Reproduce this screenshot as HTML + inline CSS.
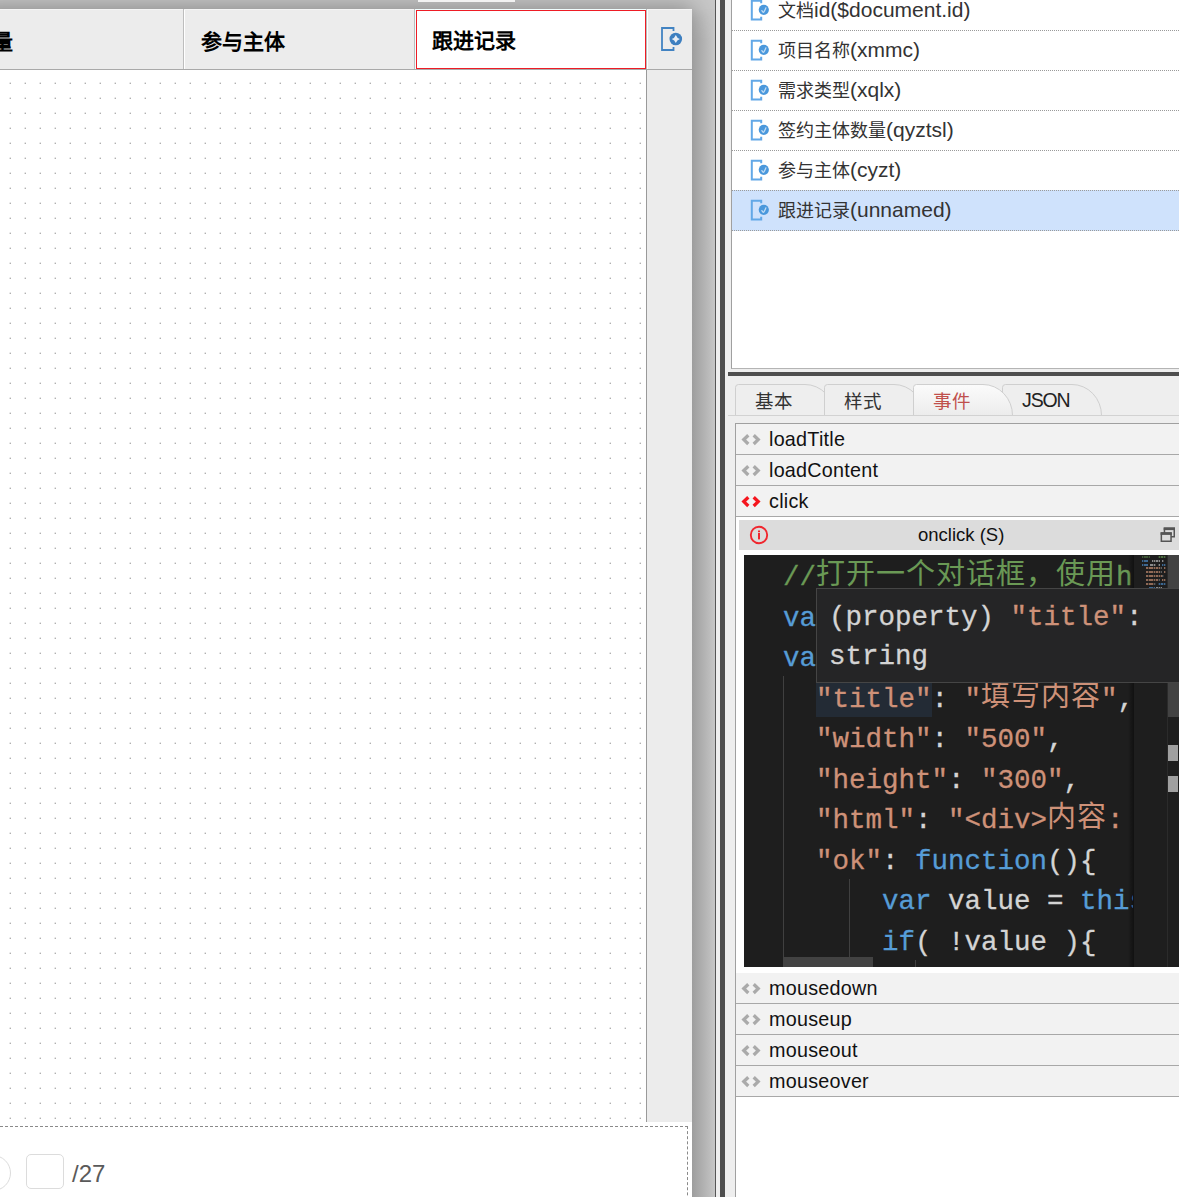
<!DOCTYPE html>
<html lang="zh-CN"><head><meta charset="utf-8">
<style>
*{margin:0;padding:0;box-sizing:border-box}
html,body{width:1179px;height:1197px;overflow:hidden;background:#eeeeee;font-family:"Liberation Sans",sans-serif}
.a{position:absolute}
#bg{left:0;top:0;width:715px;height:1197px;background:#c8c8c8;overflow:hidden}
#panel{left:-20px;top:9px;width:712px;height:1250px;background:#fff;box-shadow:0 0 22px 2px rgba(0,0,0,0.32)}
#hdr{left:0;top:9px;width:692px;height:61px;background:#ececec;border-top:1px solid #f5f5f5;border-bottom:1px solid #a9a9a9}
.sep{top:9px;width:1px;height:60px;background:#bdbdbd}
.sepw{top:10px;width:1px;height:59px;background:#fff}
.ht{font-weight:bold;font-size:21px;color:#000;top:29px;line-height:26px;white-space:nowrap}
#grid{left:0;top:70px;width:646px;height:1052px}
#vstrip{left:646px;top:70px;width:46px;height:1052px;background:#ececec;border-left:1px solid #9a9a9a}
#bottom{left:0;top:1122px;width:692px;height:75px;background:#fff}
.rl{font-size:21px;color:#333;white-space:nowrap}
.row{left:732px;width:447px;height:40px;border-bottom:1px dotted #9a9a9a}
.ev{left:736px;width:443px;height:31px;background:#f2f2f2;border-bottom:1px solid #a8a8a8}
.evt{position:absolute;left:33px;top:4px;letter-spacing:0.25px;font-size:19.75px;color:#111;line-height:22px;white-space:nowrap}
.code{font-family:"Liberation Mono",monospace;font-size:27.5px;white-space:pre;line-height:40.5px;-webkit-text-stroke:0.3px}
.c{font-size:18px}
.cj{font-size:29px;letter-spacing:1px;line-height:0;font-family:"Liberation Sans",sans-serif;position:relative;top:-1px;-webkit-text-stroke:0}
</style></head><body>
<!-- left workspace -->
<div id="bg" class="a">
    <div id="panel" class="a"></div>
  <div class="a" style="left:692px;top:9px;width:23px;height:1188px;background:linear-gradient(to right,#9d9d9d,#c6c6c6);-webkit-mask-image:linear-gradient(to bottom,transparent 0,#000 30px)"></div>
  <div class="a" style="left:418px;top:0;width:97px;height:2px;background:#f2f2f2"></div>
  <div id="hdr" class="a"></div>
  <div class="a sep" style="left:183px"></div>
  <div class="a sepw" style="left:184px"></div>
  <div class="a sep" style="left:414px"></div>
  <div class="a" style="left:415px;top:9px;width:231px;height:60px;background:#fff;border:1px solid #f0ffff"></div>
  <div class="a" style="left:416px;top:10px;width:230px;height:59px;border:1px solid #ee1c25"></div>
  <div class="a sep" style="left:646px;background:#b6bdbd"></div>
  <div class="a sepw" style="left:647px"></div>
  <div class="a ht" style="left:-8px">量</div>
  <div class="a ht" style="left:201px">参与主体</div>
  <div class="a ht" style="left:432px;top:28px">跟进记录</div>
  <div id="grid" class="a"><svg width="646" height="1052" style="display:block"><defs><pattern id="dp" x="9" y="12" width="15" height="15" patternUnits="userSpaceOnUse"><rect x="0.6" y="0.6" width="1.4" height="1.4" fill="#b0b0b0"/></pattern></defs><rect width="646" height="1052" fill="url(#dp)"/></svg></div>
  <div id="vstrip" class="a"></div>
  <svg class="a" style="left:656px;top:24px" width="32" height="32" viewBox="0 0 32 32">
    <path d="M17.5 7 V4 H6 V26 H17.5 V23" fill="none" stroke="#4283c2" stroke-width="1.8"/>
    <circle cx="19.8" cy="15" r="6.3" fill="#3d7fc0"/>
    <path d="M19.8 10.9 Q20.900000000000002 13.9 23.9 15 Q20.900000000000002 16.1 19.8 19.1 Q18.7 16.1 15.700000000000001 15 Q18.7 13.9 19.8 10.9 Z" fill="#e8eef5"/>
  </svg>
  <div id="bottom" class="a">
    <div class="a" style="left:-10px;top:4px;width:698px;height:100px;border:1px dashed #8a8a8a"></div>
    <div class="a" style="left:-25px;top:33px;width:36px;height:36px;border:1px solid #dcdcdc;border-radius:50%"></div>
    <div class="a" style="left:26px;top:32px;width:38px;height:35px;border:1px solid #dcdcdc;border-radius:5px"></div>
    <div class="a" style="left:72px;top:38px;font-size:24px;color:#5a5a5a;line-height:28px">/27</div>
  </div>
</div>
<!-- splitter -->
<div class="a" style="left:715px;top:0;width:1px;height:1197px;background:#555"></div>
<div class="a" style="left:716px;top:0;width:4px;height:1197px;background:#eeeeee"></div>
<div class="a" style="left:720px;top:0;width:5px;height:1197px;background:#4e4e4e"></div>
<!-- list panel -->
<div class="a" style="left:731px;top:0;width:448px;height:369px;background:#fff;border-left:1px solid #a0a0a0;border-bottom:1px solid #b4b4b4"></div>
<div id="rows"><div class="a row" style="top:-9px;">
  <svg class="a" style="left:14px;top:5px" width="30" height="30" viewBox="0 0 30 30"><path d="M15.2 7.2 V4.7 H5.8 V23.5 H15.2 V20.8" fill="none" stroke="#62a8e7" stroke-width="2"/><circle cx="17.8" cy="13.8" r="5.1" fill="#4a98dc"/><path d="M15.9 14.6 Q17 16.6 17.6 16.3 Q19 14.5 19.9 11.8" fill="none" stroke="#c4ddf4" stroke-width="1.2" stroke-linecap="round"/></svg>
  <div class="a rl" style="left:46px;top:7px;line-height:24px"><span class="c">文档</span>id($document.id)</div></div>
<div class="a row" style="top:31px;">
  <svg class="a" style="left:14px;top:5px" width="30" height="30" viewBox="0 0 30 30"><path d="M15.2 7.2 V4.7 H5.8 V23.5 H15.2 V20.8" fill="none" stroke="#62a8e7" stroke-width="2"/><circle cx="17.8" cy="13.8" r="5.1" fill="#4a98dc"/><path d="M15.9 14.6 Q17 16.6 17.6 16.3 Q19 14.5 19.9 11.8" fill="none" stroke="#c4ddf4" stroke-width="1.2" stroke-linecap="round"/></svg>
  <div class="a rl" style="left:46px;top:7px;line-height:24px"><span class="c">项目名称</span>(xmmc)</div></div>
<div class="a row" style="top:71px;">
  <svg class="a" style="left:14px;top:5px" width="30" height="30" viewBox="0 0 30 30"><path d="M15.2 7.2 V4.7 H5.8 V23.5 H15.2 V20.8" fill="none" stroke="#62a8e7" stroke-width="2"/><circle cx="17.8" cy="13.8" r="5.1" fill="#4a98dc"/><path d="M15.9 14.6 Q17 16.6 17.6 16.3 Q19 14.5 19.9 11.8" fill="none" stroke="#c4ddf4" stroke-width="1.2" stroke-linecap="round"/></svg>
  <div class="a rl" style="left:46px;top:7px;line-height:24px"><span class="c">需求类型</span>(xqlx)</div></div>
<div class="a row" style="top:111px;">
  <svg class="a" style="left:14px;top:5px" width="30" height="30" viewBox="0 0 30 30"><path d="M15.2 7.2 V4.7 H5.8 V23.5 H15.2 V20.8" fill="none" stroke="#62a8e7" stroke-width="2"/><circle cx="17.8" cy="13.8" r="5.1" fill="#4a98dc"/><path d="M15.9 14.6 Q17 16.6 17.6 16.3 Q19 14.5 19.9 11.8" fill="none" stroke="#c4ddf4" stroke-width="1.2" stroke-linecap="round"/></svg>
  <div class="a rl" style="left:46px;top:7px;line-height:24px"><span class="c">签约主体数量</span>(qyztsl)</div></div>
<div class="a row" style="top:151px;">
  <svg class="a" style="left:14px;top:5px" width="30" height="30" viewBox="0 0 30 30"><path d="M15.2 7.2 V4.7 H5.8 V23.5 H15.2 V20.8" fill="none" stroke="#62a8e7" stroke-width="2"/><circle cx="17.8" cy="13.8" r="5.1" fill="#4a98dc"/><path d="M15.9 14.6 Q17 16.6 17.6 16.3 Q19 14.5 19.9 11.8" fill="none" stroke="#c4ddf4" stroke-width="1.2" stroke-linecap="round"/></svg>
  <div class="a rl" style="left:46px;top:7px;line-height:24px"><span class="c">参与主体</span>(cyzt)</div></div>
<div class="a row" style="top:190px;height:41px;border-top:1px dotted #9a9a9a;background:#cfe2fc;">
  <svg class="a" style="left:14px;top:5px" width="30" height="30" viewBox="0 0 30 30"><path d="M15.2 7.2 V4.7 H5.8 V23.5 H15.2 V20.8" fill="none" stroke="#62a8e7" stroke-width="2"/><circle cx="17.8" cy="13.8" r="5.1" fill="#4a98dc"/><path d="M15.9 14.6 Q17 16.6 17.6 16.3 Q19 14.5 19.9 11.8" fill="none" stroke="#c4ddf4" stroke-width="1.2" stroke-linecap="round"/></svg>
  <div class="a rl" style="left:46px;top:7px;line-height:24px"><span class="c">跟进记录</span>(unnamed)</div></div></div>
<!-- horizontal splitter -->
<div class="a" style="left:728px;top:372px;width:451px;height:4px;background:#4e4e4e"></div>
<!-- tabs -->
<div id="tabs"><svg class="a" style="left:725px;top:376px" width="454" height="48" viewBox="725 376 454 48">
<defs><linearGradient id="tg" x1="0" y1="0" x2="0" y2="1"><stop offset="0" stop-color="#fbfbfb"/><stop offset="1" stop-color="#ececec"/></linearGradient></defs>

<path d="M735.5 415.5 V387.5 Q735.5 384.5 738.5 384.5 H805 A29.5 31 0 0 1 834.5 415.5" fill="#eeeeee" stroke="#cfcfcf" stroke-width="1"/>
<path d="M824.5 415.5 V387.5 Q824.5 384.5 827.5 384.5 H894 A29.5 31 0 0 1 923.5 415.5" fill="#eeeeee" stroke="#cfcfcf" stroke-width="1"/>
<path d="M1002.5 415.5 V387.5 Q1002.5 384.5 1005.5 384.5 H1072 A29.5 31 0 0 1 1101.5 415.5" fill="#eeeeee" stroke="#cfcfcf" stroke-width="1"/>
<path d="M913.5 415.5 V387.5 Q913.5 384.5 916.5 384.5 H983 A29.5 31 0 0 1 1012.5 415.5" fill="url(#tg)" stroke="#cfcfcf" stroke-width="1"/>
<line x1="728" y1="415.5" x2="1179" y2="415.5" stroke="#d2d2d2" stroke-width="1"/></svg>
<div class="a" style="left:755px;top:390px;font-size:18.5px;color:#333;line-height:24px">基本</div>
<div class="a" style="left:844px;top:390px;font-size:18.5px;color:#333;line-height:24px">样式</div>
<div class="a" style="left:933px;top:390px;font-size:18.5px;color:#c0504d;line-height:24px">事件</div>
<div class="a" style="left:1022px;top:388px;color:#222;line-height:24px;font-size:19.5px;letter-spacing:-1.1px">JSON</div></div>
<!-- events panel -->
<div class="a" style="left:735px;top:423px;width:444px;height:774px;background:#fff;border-left:1px solid #a0a0a0;border-top:1px solid #a0a0a0"></div>
<div id="events"><div class="a ev" style="top:424px"><svg class="a" style="left:4px;top:9px" width="22" height="14" viewBox="0 0 22 14"><path d="M8.3 2.2 L3.8 6.6 L8.3 11 M13.7 2.2 L18.2 6.6 L13.7 11" fill="none" stroke="#aaaaaa" stroke-width="3.3"/></svg><div class="evt">loadTitle</div></div>
<div class="a ev" style="top:455px"><svg class="a" style="left:4px;top:9px" width="22" height="14" viewBox="0 0 22 14"><path d="M8.3 2.2 L3.8 6.6 L8.3 11 M13.7 2.2 L18.2 6.6 L13.7 11" fill="none" stroke="#aaaaaa" stroke-width="3.3"/></svg><div class="evt">loadContent</div></div>
<div class="a ev" style="top:486px"><svg class="a" style="left:4px;top:9px" width="22" height="14" viewBox="0 0 22 14"><path d="M8.3 2.2 L3.8 6.6 L8.3 11 M13.7 2.2 L18.2 6.6 L13.7 11" fill="none" stroke="#f5161e" stroke-width="3.3"/></svg><div class="evt">click</div></div>
<div class="a ev" style="top:973px"><svg class="a" style="left:4px;top:9px" width="22" height="14" viewBox="0 0 22 14"><path d="M8.3 2.2 L3.8 6.6 L8.3 11 M13.7 2.2 L18.2 6.6 L13.7 11" fill="none" stroke="#aaaaaa" stroke-width="3.3"/></svg><div class="evt">mousedown</div></div>
<div class="a ev" style="top:1004px"><svg class="a" style="left:4px;top:9px" width="22" height="14" viewBox="0 0 22 14"><path d="M8.3 2.2 L3.8 6.6 L8.3 11 M13.7 2.2 L18.2 6.6 L13.7 11" fill="none" stroke="#aaaaaa" stroke-width="3.3"/></svg><div class="evt">mouseup</div></div>
<div class="a ev" style="top:1035px"><svg class="a" style="left:4px;top:9px" width="22" height="14" viewBox="0 0 22 14"><path d="M8.3 2.2 L3.8 6.6 L8.3 11 M13.7 2.2 L18.2 6.6 L13.7 11" fill="none" stroke="#aaaaaa" stroke-width="3.3"/></svg><div class="evt">mouseout</div></div>
<div class="a ev" style="top:1066px"><svg class="a" style="left:4px;top:9px" width="22" height="14" viewBox="0 0 22 14"><path d="M8.3 2.2 L3.8 6.6 L8.3 11 M13.7 2.2 L18.2 6.6 L13.7 11" fill="none" stroke="#aaaaaa" stroke-width="3.3"/></svg><div class="evt">mouseover</div></div>
<div class="a" style="left:739px;top:520px;width:440px;height:30px;background:#dcdcdc">
  <svg class="a" style="left:10px;top:5px" width="20" height="20" viewBox="0 0 20 20"><circle cx="10" cy="10" r="8.2" fill="none" stroke="#f0262e" stroke-width="1.9"/><rect x="9" y="5.5" width="2" height="1.7" fill="#f0262e"/><rect x="9" y="8" width="2" height="6.4" fill="#f0262e"/></svg>
  <div class="a" style="left:179px;top:4px;font-size:18.5px;color:#111;line-height:22px;white-space:nowrap">onclick (S)</div>
  <svg class="a" style="left:421px;top:7px" width="17" height="17" viewBox="0 0 17 17"><rect x="4.45" y="1.25" width="9.8" height="8.5" fill="none" stroke="#555" stroke-width="1.5"/><rect x="3.7" y="0.5" width="11.3" height="2.6" fill="#555"/><rect x="1.35" y="6.05" width="9.7" height="8.2" fill="#dcdcdc" stroke="#555" stroke-width="1.5"/><rect x="0.6" y="5.3" width="11.2" height="2.6" fill="#555"/></svg>
</div>
<div id="editor" class="a" style="left:744px;top:555px;width:435px;height:412px;background:#1e1e1e;overflow:hidden">
  <div class="a" style="left:72px;top:128px;width:116px;height:34px;background:#232b35"></div>
  <div class="a" style="left:39px;top:121px;width:1px;height:300px;background:#404040"></div>
  <div class="a" style="left:105px;top:324px;width:1px;height:100px;background:#404040"></div>
  <div class="a" style="left:171px;top:405px;width:1px;height:20px;background:#404040"></div>
  <div class="a" style="left:0;top:0;width:389px;height:412px;overflow:hidden">
  <div class="a code" style="left:39px;top:3.0px"><span style="color:#6a9955">//<span class="cj">打开一个对话框，使用</span>html<span class="cj">内容</span></span></div><div class="a code" style="left:39px;top:43.5px"><span style="color:#569cd6">var</span><span style="color:#d4d4d4"> self = </span><span style="color:#569cd6">this</span><span style="color:#d4d4d4">;</span></div><div class="a code" style="left:39px;top:84.0px"><span style="color:#569cd6">var</span><span style="color:#d4d4d4"> dlg = </span><span style="color:#569cd6">this</span><span style="color:#d4d4d4">.form.dialog({</span></div><div class="a code" style="left:39px;top:124.5px"><span style="color:#d4d4d4">  </span><span style="color:#ce9178">&quot;title&quot;</span><span style="color:#d4d4d4">: </span><span style="color:#ce9178">&quot;<span class="cj">填写内容</span>&quot;</span><span style="color:#d4d4d4">,</span></div><div class="a code" style="left:39px;top:165.0px"><span style="color:#d4d4d4">  </span><span style="color:#ce9178">&quot;width&quot;</span><span style="color:#d4d4d4">: </span><span style="color:#ce9178">&quot;500&quot;</span><span style="color:#d4d4d4">,</span></div><div class="a code" style="left:39px;top:205.5px"><span style="color:#d4d4d4">  </span><span style="color:#ce9178">&quot;height&quot;</span><span style="color:#d4d4d4">: </span><span style="color:#ce9178">&quot;300&quot;</span><span style="color:#d4d4d4">,</span></div><div class="a code" style="left:39px;top:246.0px"><span style="color:#d4d4d4">  </span><span style="color:#ce9178">&quot;html&quot;</span><span style="color:#d4d4d4">: </span><span style="color:#ce9178">&quot;&lt;div&gt;<span class="cj">内容</span>: div&gt;&quot;</span></div><div class="a code" style="left:39px;top:286.5px"><span style="color:#d4d4d4">  </span><span style="color:#ce9178">&quot;ok&quot;</span><span style="color:#d4d4d4">: </span><span style="color:#569cd6">function</span><span style="color:#d4d4d4">(){</span></div><div class="a code" style="left:39px;top:327.0px"><span style="color:#d4d4d4">      </span><span style="color:#569cd6">var</span><span style="color:#d4d4d4"> value = </span><span style="color:#569cd6">this</span><span style="color:#d4d4d4">.node</span></div><div class="a code" style="left:39px;top:367.5px"><span style="color:#d4d4d4">      </span><span style="color:#569cd6">if</span><span style="color:#d4d4d4">( !value ){</span></div><div class="a code" style="left:39px;top:408.0px"><span style="color:#d4d4d4">          </span><span style="color:#569cd6">this</span><span style="color:#d4d4d4">.alert</span></div>
  </div>
  <div class="a" style="left:384px;top:0;width:6px;height:412px;background:linear-gradient(to right,rgba(0,0,0,0),rgba(0,0,0,0.45))"></div>
  <div class="a" style="left:39px;top:402px;width:90px;height:10px;background:#424242"></div>
  <div id="minimap" class="a" style="left:390px;top:0;width:33px;height:412px;-webkit-mask-image:repeating-linear-gradient(to right,#000 0 1.5px,rgba(0,0,0,0.35) 1.5px 2.5px)"><div class="a" style="left:8px;top:0.5px;width:8px;height:2px;background:#5f8f4e;opacity:0.5"></div><div class="a" style="left:24px;top:0.5px;width:8px;height:2px;background:#5f8f4e;opacity:0.7"></div><div class="a" style="left:8px;top:4.5px;width:6px;height:2px;background:#4a86c0;opacity:0.7"></div><div class="a" style="left:18px;top:4.5px;width:8px;height:2px;background:#b8b8b8;opacity:0.7"></div><div class="a" style="left:27.5px;top:4.5px;width:2.5px;height:2px;background:#b8b8b8;opacity:0.7"></div><div class="a" style="left:8px;top:8.5px;width:6px;height:2px;background:#4a86c0;opacity:0.7"></div><div class="a" style="left:16px;top:8.5px;width:6px;height:2px;background:#b8b8b8;opacity:0.7"></div><div class="a" style="left:24px;top:8.5px;width:2px;height:2px;background:#b8b8b8;opacity:0.7"></div><div class="a" style="left:28px;top:8.5px;width:4px;height:2px;background:#4a86c0;opacity:0.7"></div><div class="a" style="left:12px;top:12.3px;width:14px;height:2px;background:#c08a6e;opacity:0.7"></div><div class="a" style="left:26px;top:12.3px;width:2px;height:2px;background:#777;opacity:0.7"></div><div class="a" style="left:30px;top:12.3px;width:2px;height:2px;background:#c08a6e;opacity:0.7"></div><div class="a" style="left:12px;top:16px;width:14px;height:2px;background:#c08a6e;opacity:0.7"></div><div class="a" style="left:26px;top:16px;width:2px;height:2px;background:#777;opacity:0.7"></div><div class="a" style="left:30px;top:16px;width:2px;height:2px;background:#c08a6e;opacity:0.7"></div><div class="a" style="left:12px;top:20px;width:16px;height:2px;background:#c08a6e;opacity:0.7"></div><div class="a" style="left:28px;top:20px;width:2px;height:2px;background:#777;opacity:0.7"></div><div class="a" style="left:12px;top:24px;width:12px;height:2px;background:#c08a6e;opacity:0.7"></div><div class="a" style="left:24px;top:24px;width:2px;height:2px;background:#777;opacity:0.7"></div><div class="a" style="left:28px;top:24px;width:4px;height:2px;background:#c08a6e;opacity:0.7"></div><div class="a" style="left:12px;top:28px;width:8px;height:2px;background:#c08a6e;opacity:0.7"></div><div class="a" style="left:20px;top:28px;width:2px;height:2px;background:#777;opacity:0.7"></div><div class="a" style="left:24px;top:28px;width:8px;height:2px;background:#4a86c0;opacity:0.7"></div><div class="a" style="left:15px;top:32px;width:6px;height:2px;background:#4a86c0;opacity:0.7"></div><div class="a" style="left:22px;top:32px;width:6px;height:2px;background:#b8b8b8;opacity:0.7"></div></div>
  <div class="a" style="left:423px;top:0;width:12px;height:412px;border-left:1px solid #2b2b2b"></div>
  <div class="a" style="left:424px;top:0;width:11px;height:162px;background:#424242"></div>
  <div class="a" style="left:424px;top:190px;width:10px;height:16px;background:#a0a0a0"></div>
  <div class="a" style="left:424px;top:221px;width:10px;height:16px;background:#a0a0a0"></div>
</div>
<div class="a" style="left:816px;top:588px;width:380px;height:95px;background:#252526;border:1px solid #454545">
  <div class="a code" style="left:12px;top:9px;color:#d4d4d4">(property) <span style="color:#ce9178">"title"</span>:</div>
  <div class="a code" style="left:12px;top:47.5px;color:#d4d4d4">string</div>
</div></div>
</body></html>
